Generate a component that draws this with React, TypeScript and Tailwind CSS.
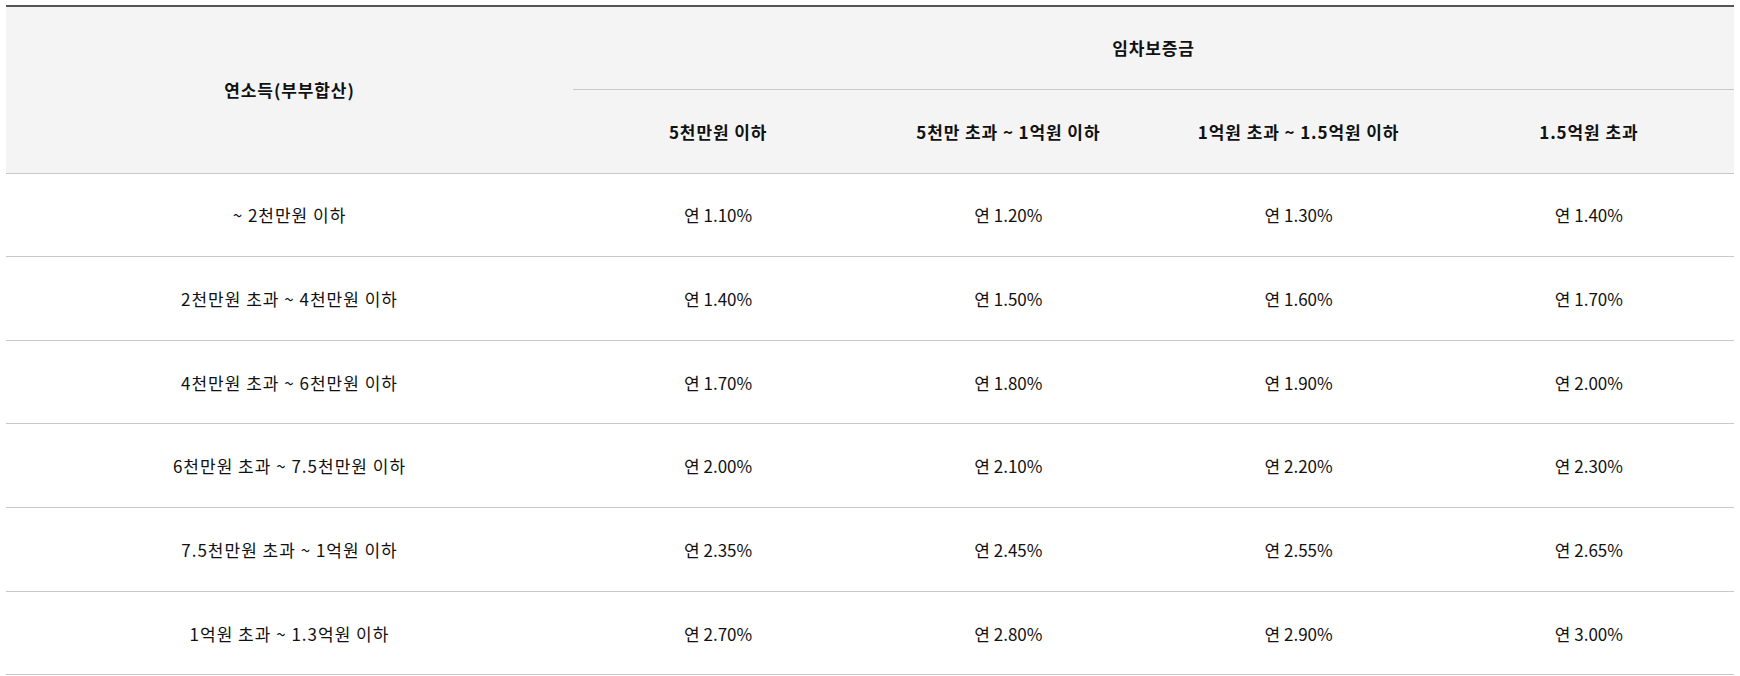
const cols = ["5천만원 이하", "5천만 초과 ~ 1억원 이하", "1억원 초과 ~ 1.5억원 이하", "1.5억원 초과"];

const rows = [
  { label: "~ 2천만원 이하", rates: ["1.10", "1.20", "1.30", "1.40"] },
  { label: "2천만원 초과 ~ 4천만원 이하", rates: ["1.40", "1.50", "1.60", "1.70"] },
  { label: "4천만원 초과 ~ 6천만원 이하", rates: ["1.70", "1.80", "1.90", "2.00"] },
  { label: "6천만원 초과 ~ 7.5천만원 이하", rates: ["2.00", "2.10", "2.20", "2.30"] },
  { label: "7.5천만원 초과 ~ 1억원 이하", rates: ["2.35", "2.45", "2.55", "2.65"] },
  { label: "1억원 초과 ~ 1.3억원 이하", rates: ["2.70", "2.80", "2.90", "3.00"] },
];

export default function App() {
  return (
    <div className="bg-white pt-[5px] px-[6px] min-h-[676px] font-['Noto_Sans_CJK_KR','Noto_Sans',sans-serif] text-[#111]">
      <table className="w-full table-fixed border-collapse border-t-2 border-[#555] text-[17px] leading-none">
        <colgroup>
          <col className="w-[567px]" />
          <col />
          <col />
          <col />
          <col />
        </colgroup>
        <thead className="bg-[#f4f4f4] font-bold tracking-[0.9px]">
          <tr className="h-[83px]">
            <th rowSpan={2} className="border-b border-[#c8c8c8] font-bold">
              연소득(부부합산)
            </th>
            <th colSpan={4} className="border-b border-[#c8c8c8] font-bold">
              임차보증금
            </th>
          </tr>
          <tr className="h-[84px]">
            {cols.map((c) => (
              <th key={c} className="border-b border-[#c8c8c8] font-bold">
                {c}
              </th>
            ))}
          </tr>
        </thead>
        <tbody>
          {rows.map((r) => (
            <tr key={r.label} className="h-[83.67px]">
              <td className="border-b border-[#c8c8c8] text-center tracking-[1px]">{r.label}</td>
              {r.rates.map((v, i) => (
                <td key={i} className="border-b border-[#c8c8c8] text-center">
                  연 {v}%
                </td>
              ))}
            </tr>
          ))}
        </tbody>
      </table>
    </div>
  );
}
